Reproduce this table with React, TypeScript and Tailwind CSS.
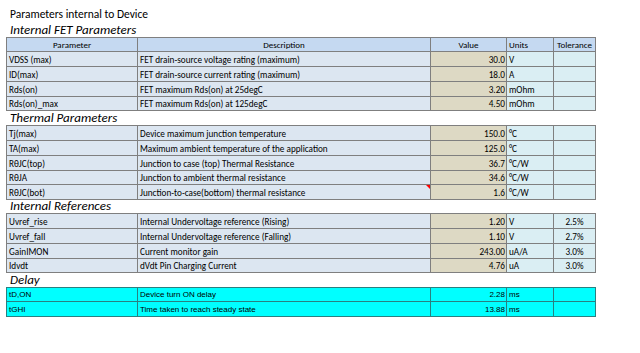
import React from "react";

type Row = {
  p: string;
  d: string;
  v: string;
  u: string;
  t?: string;
  h: "14" | "15";
  flag?: boolean;
};

const calibri = { fontFamily: "Carlito, Lato, 'Liberation Sans', sans-serif" };
const arial = { fontFamily: "'Liberation Sans', Arial, sans-serif" };

function HeaderRow() {
  const c =
    "h-[14px] border-r border-b border-[#7f7f7f] bg-[#c5d9f1] text-[9px] leading-[13px] whitespace-nowrap overflow-hidden";
  return (
    <>
      <div className={c + " text-center"}>Parameter</div>
      <div className={c + " text-center"}>Description</div>
      <div className={c + " text-center"}>Value</div>
      <div className={c + " pl-[2px]"}>Units</div>
      <div className={c + " text-center"}>Tolerance</div>
    </>
  );
}

function DataRow({ r }: { r: Row }) {
  const h = r.h === "14" ? "h-[14px] leading-[14px]" : "h-[15px] leading-[15px]";
  const base =
    h + " border-r border-b border-[#7f7f7f] text-[9.2px] whitespace-nowrap overflow-hidden";
  return (
    <>
      <div className={base + " bg-[#dce6f1] pl-[2px]"}>{r.p}</div>
      <div className={base + " bg-[#dce6f1] pl-[2px] relative"}>
        {r.d}
        {r.flag && (
          <span className="absolute top-0 right-0 w-0 h-0 border-l-[4px] border-l-transparent border-t-[4px] border-t-[#ff0000]" />
        )}
      </div>
      <div className={base + " bg-[#ddd9c4] text-right pr-[1px]"}>{r.v}</div>
      <div className={base + " bg-[#daeef3] pl-[2px]"}>{r.u}</div>
      <div className={base + " bg-[#daeef3] text-center"}>{r.t ?? ""}</div>
    </>
  );
}

function DelayRow({ r }: { r: Row }) {
  const h = r.h === "14" ? "h-[14px] leading-[14px]" : "h-[15px] leading-[15px]";
  const base =
    h + " border-r border-b border-[#2a8080] bg-[#00ffff] text-[8px] whitespace-nowrap overflow-hidden";
  return (
    <>
      <div className={base + " pl-[2px]"}>{r.p}</div>
      <div className={base + " pl-[2px]"}>{r.d}</div>
      <div className={base + " text-right pr-[1px]"}>{r.v}</div>
      <div className={base + " pl-[2px]"}>{r.u}</div>
      <div className={base}></div>
    </>
  );
}

function Heading({ text, h }: { text: string; h: string }) {
  return (
    <div className={h + " pl-[4px] italic text-[13px] leading-none flex items-end pb-[1px]"} style={calibri}>
      {text}
    </div>
  );
}

const fet: Row[] = [
  { p: "VDSS (max)", d: "FET drain-source voltage rating (maximum)", v: "30.0", u: "V", h: "15" },
  { p: "ID(max)", d: "FET drain-source current rating (maximum)", v: "18.0", u: "A", h: "15" },
  { p: "Rds(on)", d: "FET maximum Rds(on) at 25degC", v: "3.20", u: "mOhm", h: "15" },
  { p: "Rds(on)_max", d: "FET maximum Rds(on) at 125degC", v: "4.50", u: "mOhm", h: "14" },
];

const thermal: Row[] = [
  { p: "Tj(max)", d: "Device maximum junction temperature", v: "150.0", u: "°C", h: "15" },
  { p: "TA(max)", d: "Maximum ambient temperature of the application", v: "125.0", u: "°C", h: "15" },
  { p: "RθJC(top)", d: "Junction to case (top) Thermal Resistance", v: "36.7", u: "°C/W", h: "15" },
  { p: "RθJA", d: "Junction to ambient thermal resistance", v: "34.6", u: "°C/W", h: "14" },
  { p: "RθJC(bot)", d: "Junction-to-case(bottom) thermal resistance", v: "1.6", u: "°C/W", h: "15", flag: true },
];

const refs: Row[] = [
  { p: "Uvref_rise", d: "Internal Undervoltage reference (Rising)", v: "1.20", u: "V", t: "2.5%", h: "15" },
  { p: "Uvref_fall", d: "Internal Undervoltage reference (Falling)", v: "1.10", u: "V", t: "2.7%", h: "15" },
  { p: "GainIMON", d: "Current monitor gain", v: "243.00", u: "uA/A", t: "3.0%", h: "15" },
  { p: "Idvdt", d: "dVdt Pin Charging Current", v: "4.76", u: "uA", t: "3.0%", h: "14" },
];

const delay: Row[] = [
  { p: "tD,ON", d: "Device turn ON delay", v: "2.28", u: "ms", h: "14" },
  { p: "tGHI", d: "Time taken to reach steady state", v: "13.88", u: "ms", h: "15" },
];

const grid = "grid grid-cols-[131px_293px_76px_47px_42px] w-fit border-l border-t";

export default function App() {
  return (
    <div className="w-[640px] h-[353px] bg-white text-black pl-[6px] overflow-hidden" style={calibri}>
      <div className="h-[23px] pl-[4px] pt-[9px] text-[11.5px] leading-[11px]">Parameters internal to Device</div>
      <Heading text="Internal FET Parameters" h="h-[14px]" />
      <div className={grid + " border-[#7f7f7f]"}>
        <HeaderRow />
        {fet.map((r) => (
          <DataRow key={r.p} r={r} />
        ))}
      </div>
      <Heading text="Thermal Parameters" h="h-[14px]" />
      <div className={grid + " border-[#7f7f7f]"}>
        {thermal.map((r) => (
          <DataRow key={r.p} r={r} />
        ))}
      </div>
      <Heading text="Internal References" h="h-[13px]" />
      <div className={grid + " border-[#7f7f7f]"}>
        {refs.map((r) => (
          <DataRow key={r.p} r={r} />
        ))}
      </div>
      <Heading text="Delay" h="h-[14px]" />
      <div className={grid + " border-[#2a8080]"} style={arial}>
        {delay.map((r) => (
          <DelayRow key={r.p} r={r} />
        ))}
      </div>
    </div>
  );
}
